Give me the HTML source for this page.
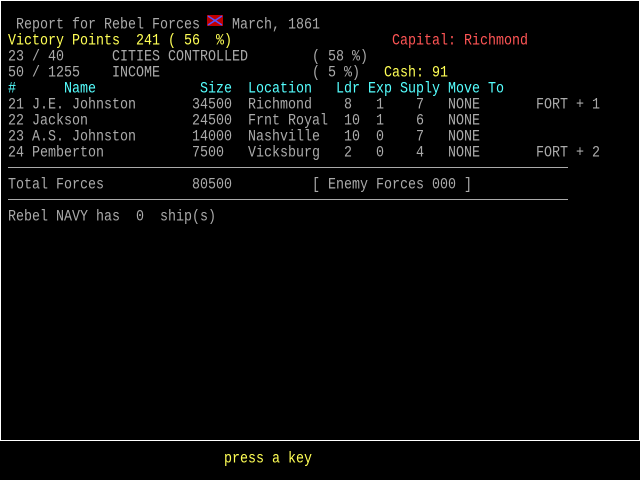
<!DOCTYPE html>
<html><head><meta charset="utf-8"><style>
html,body{margin:0;padding:0;background:#000;width:640px;height:480px;overflow:hidden}
#box{position:absolute;left:0;top:0;width:638px;height:439px;border:1px solid #fff}
.t{position:absolute;font-family:"Liberation Mono",monospace;font-size:13.33px;line-height:16px;height:16px;white-space:pre;color:#aaa;transform-origin:0 0;transform:scaleY(1.15)}
.y{color:#ffff55}.c{color:#55ffff}.r{color:#ff5555}
.hr{position:absolute;left:8px;width:560px;height:1px;background:#aaa}
</style></head><body>
<div id="box"></div>
<div class="t" style="left:16px;top:17px">Report for Rebel Forces</div>
<svg style="position:absolute;left:207px;top:15px" width="16" height="11"><rect width="16" height="11" fill="#c00000"/><path d="M1 1L15 10M15 1L1 10" stroke="#5555ff" stroke-width="1.6"/></svg>
<div class="t" style="left:232px;top:17px">March, 1861</div>
<div class="t y" style="left:8px;top:33px">Victory Points  241 ( 56  %)</div>
<div class="t r" style="left:392px;top:33px">Capital: Richmond</div>
<div class="t" style="left:8px;top:49px">23 / 40</div>
<div class="t" style="left:112px;top:49px">CITIES CONTROLLED</div>
<div class="t" style="left:312px;top:49px">( 58 %)</div>
<div class="t" style="left:8px;top:65px">50 / 1255</div>
<div class="t" style="left:112px;top:65px">INCOME</div>
<div class="t" style="left:312px;top:65px">( 5 %)</div>
<div class="t y" style="left:384px;top:65px">Cash: 91</div>

<div class="t c" style="left:8px;top:81px">#</div>
<div class="t c" style="left:64px;top:81px">Name</div>
<div class="t c" style="left:200px;top:81px">Size</div>
<div class="t c" style="left:248px;top:81px">Location</div>
<div class="t c" style="left:336px;top:81px">Ldr</div>
<div class="t c" style="left:368px;top:81px">Exp</div>
<div class="t c" style="left:400px;top:81px">Suply</div>
<div class="t c" style="left:448px;top:81px">Move</div>
<div class="t c" style="left:488px;top:81px">To</div>

<div class="t" style="left:8px;top:97px">21 J.E. Johnston</div>
<div class="t" style="left:192px;top:97px">34500</div>
<div class="t" style="left:248px;top:97px">Richmond</div>
<div class="t" style="left:344px;top:97px">8</div>
<div class="t" style="left:376px;top:97px">1</div>
<div class="t" style="left:416px;top:97px">7</div>
<div class="t" style="left:448px;top:97px">NONE</div>
<div class="t" style="left:536px;top:97px">FORT + 1</div>

<div class="t" style="left:8px;top:113px">22 Jackson</div>
<div class="t" style="left:192px;top:113px">24500</div>
<div class="t" style="left:248px;top:113px">Frnt Royal</div>
<div class="t" style="left:344px;top:113px">10</div>
<div class="t" style="left:376px;top:113px">1</div>
<div class="t" style="left:416px;top:113px">6</div>
<div class="t" style="left:448px;top:113px">NONE</div>

<div class="t" style="left:8px;top:129px">23 A.S. Johnston</div>
<div class="t" style="left:192px;top:129px">14000</div>
<div class="t" style="left:248px;top:129px">Nashville</div>
<div class="t" style="left:344px;top:129px">10</div>
<div class="t" style="left:376px;top:129px">0</div>
<div class="t" style="left:416px;top:129px">7</div>
<div class="t" style="left:448px;top:129px">NONE</div>

<div class="t" style="left:8px;top:145px">24 Pemberton</div>
<div class="t" style="left:192px;top:145px">7500</div>
<div class="t" style="left:248px;top:145px">Vicksburg</div>
<div class="t" style="left:344px;top:145px">2</div>
<div class="t" style="left:376px;top:145px">0</div>
<div class="t" style="left:416px;top:145px">4</div>
<div class="t" style="left:448px;top:145px">NONE</div>
<div class="t" style="left:536px;top:145px">FORT + 2</div>

<div class="hr" style="top:167px"></div>
<div class="t" style="left:8px;top:177px">Total Forces</div>
<div class="t" style="left:192px;top:177px">80500</div>
<div class="t" style="left:312px;top:177px">[ Enemy Forces 000 ]</div>
<div class="hr" style="top:199px"></div>
<div class="t" style="left:8px;top:209px">Rebel NAVY has  0  ship(s)</div>
<div class="t y" style="left:224px;top:451px">press a key</div>
</body></html>
